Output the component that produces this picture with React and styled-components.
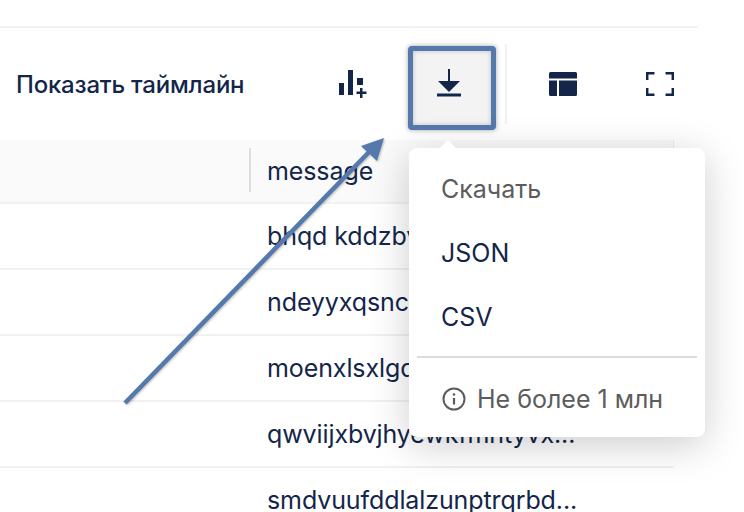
import React from "react";
import styled, { createGlobalStyle } from "styled-components";

const GlobalStyle = createGlobalStyle`
  html, body {
    margin: 0;
    background: #fff;
    overflow: hidden;
  }
  body {
    font-family: Inter, Roboto, sans-serif;
    color: #13264a;
  }
`;

const Page = styled.div`
  position: relative;
  width: 744px;
  height: 512px;
  overflow: hidden;
  padding-top: 26px;
  box-sizing: border-box;
`;

const Panel = styled.div`
  width: 698px;
  border-top: 2px solid #f1f1f1;
`;

const Toolbar = styled.div`
  display: flex;
  align-items: center;
  height: 112px;
  padding-left: 16px;
`;

const TimelineLabel = styled.span`
  font-size: 24px;
  font-weight: 500;
  letter-spacing: -0.2px;
  width: 312px;
  white-space: nowrap;
`;

const ToolButton = styled.div`
  display: flex;
  align-items: center;
  justify-content: center;
  flex: none;
  width: ${({ $w }) => $w}px;
  height: 84px;
  margin-left: ${({ $ml }) => $ml || 0}px;
  box-sizing: border-box;
  border-radius: 4px;
  ${({ $marked }) =>
    $marked &&
    `
    margin-top: 8px;
    padding: 0 6px 8px 0;
    background: #f3f3f3;
    border: 5px solid #5479ad;
    box-shadow: 0 0 5px rgba(0, 0, 0, 0.35), inset 0 0 5px rgba(0, 0, 0, 0.2);
  `}
`;

const ToolDivider = styled.div`
  flex: none;
  width: 2px;
  height: 80px;
  margin-left: 9px;
  background: #f1f1f1;
`;

const Table = styled.div`
  width: 674px;
`;

const HeaderRow = styled.div`
  display: flex;
  align-items: center;
  height: 64px;
  background: #fafafa;
  border-bottom: 2px solid #f1f1f1;
  border-right: 1px solid #e6ecf4;
  box-sizing: border-box;
  padding-left: 249px;
`;

const ColumnRule = styled.div`
  width: 2px;
  height: 44px;
  background: #dedede;
  margin-right: 16px;
  margin-bottom: 2px;
`;

const Row = styled.div`
  display: flex;
  align-items: center;
  height: 66px;
  box-sizing: border-box;
  border-bottom: 2px solid #f1f1f1;
  padding-left: 267px;
`;

const CellText = styled.span`
  font-size: 25px;
  letter-spacing: -0.1px;
  white-space: nowrap;
`;

const Menu = styled.div`
  position: absolute;
  left: 409px;
  top: 148px;
  width: 296px;
  height: 289px;
  box-sizing: border-box;
  background: #fff;
  border-radius: 8px;
  box-shadow: 0 8px 40px rgba(0, 0, 0, 0.2);
  padding-top: 9px;

  &::before {
    content: "";
    position: absolute;
    left: 30px;
    top: -8px;
    width: 0;
    height: 0;
    border-left: 9px solid transparent;
    border-right: 9px solid transparent;
    border-bottom: 9px solid #fff;
  }
`;

const MenuItem = styled.div`
  display: flex;
  align-items: center;
  height: 64px;
  padding-left: 32px;
  font-size: 25px;
  color: ${({ $muted }) => ($muted ? "#5c5c5c" : "#13264a")};
`;

const MenuRule = styled.div`
  height: 2px;
  margin: 7px 8px 0;
  background: #dcdcdc;
`;

const MenuNote = styled.div`
  display: flex;
  align-items: center;
  gap: 11px;
  height: 82px;
  padding-left: 33px;
  font-size: 25px;
  color: #5c5c5c;
`;

const Annotation = styled.svg`
  position: absolute;
  left: 0;
  top: 0;
  pointer-events: none;
  filter: drop-shadow(1px 1px 1px rgba(0, 0, 0, 0.25));
`;

const ink = "#13264a";

const ChartAddIcon = () => (
  <svg width="30" height="30" viewBox="0 0 30 30" fill={ink}>
    <rect x="1" y="14" width="5" height="12" />
    <rect x="10" y="1" width="5" height="25" />
    <rect x="19" y="9" width="6" height="7" />
    <rect x="22" y="19" width="2.500" height="10" />
    <rect x="18.500" y="22.500" width="10" height="2.500" />
  </svg>
);

const DownloadIcon = () => (
  <svg width="26" height="30" viewBox="0 0 26 30" fill={ink}>
    <rect x="12" y="0" width="2" height="14" />
    <path d="M2 12h22L13 23z" />
    <rect x="1" y="24.500" width="24" height="3" />
  </svg>
);

const LayoutIcon = () => (
  <svg width="28" height="24" viewBox="0 0 28 24" fill={ink}>
    <path d="M1.500 0h25A1.500 1.500 0 0 1 28 1.500V6.500H0V1.500A1.500 1.500 0 0 1 1.500 0z" />
    <path d="M0 8.500h8V24H1.500A1.500 1.500 0 0 1 0 22.500z" />
    <path d="M10 8.500h18v14a1.500 1.500 0 0 1-1.500 1.500H10z" />
  </svg>
);

const FullscreenIcon = () => (
  <svg width="28" height="24" viewBox="0 0 28 24" fill="none" stroke={ink} strokeWidth="2.500">
    <path d="M1.200 8V1.200H8.500" />
    <path d="M19.500 1.200H26.800V8" />
    <path d="M26.800 16V22.800H19.500" />
    <path d="M8.500 22.800H1.200V16" />
  </svg>
);

const InfoIcon = () => (
  <svg width="24" height="24" viewBox="0 0 24 24" fill="none" stroke="#5c5c5c" strokeWidth="2">
    <circle cx="12" cy="12" r="10.500" />
    <path d="M12 11v6.500" strokeWidth="2.200" />
    <circle cx="12" cy="7.500" r="1.300" fill="#5c5c5c" stroke="none" />
  </svg>
);

const rows = [
  "bhqd kddzbvnqlwxtrmsoapfe...",
  "ndeyyxqsncwtfhulkgrbmaop...",
  "moenxlsxlgqtrbvwdhfkauyc...",
  "qwviijxbvjhyewkfmntyvx...",
  "smdvuufddlalzunptrqrbd...",
];

export default function App() {
  return (
    <>
      <GlobalStyle />
      <Page>
        <Panel>
          <Toolbar>
            <TimelineLabel>Показать таймлайн</TimelineLabel>
            <ToolButton $w={50}>
              <ChartAddIcon />
            </ToolButton>
            <ToolButton $w={88} $ml={30} $marked>
              <DownloadIcon />
            </ToolButton>
            <ToolDivider />
            <ToolButton $w={50} $ml={31}>
              <LayoutIcon />
            </ToolButton>
            <ToolButton $w={50} $ml={47}>
              <FullscreenIcon />
            </ToolButton>
          </Toolbar>
          <Table>
            <HeaderRow>
              <ColumnRule />
              <CellText>message</CellText>
            </HeaderRow>
            {rows.map((text) => (
              <Row key={text}>
                <CellText>{text}</CellText>
              </Row>
            ))}
          </Table>
        </Panel>

        <Menu>
          <MenuItem $muted>Скачать</MenuItem>
          <MenuItem>JSON</MenuItem>
          <MenuItem>CSV</MenuItem>
          <MenuRule />
          <MenuNote>
            <InfoIcon />
            Не более 1 млн
          </MenuNote>
        </Menu>

        <Annotation width="744" height="512" viewBox="0 0 744 512">
          <line x1="125" y1="403" x2="370" y2="151" stroke="#5479ad" strokeWidth="4.500" />
          <path d="M384 138 L377 161 L361 146 Z" fill="#5479ad" />
        </Annotation>
      </Page>
    </>
  );
}
